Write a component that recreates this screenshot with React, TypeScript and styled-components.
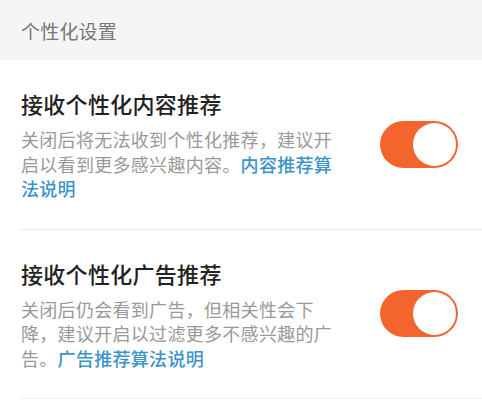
import React from "react";
import styled, { createGlobalStyle } from "styled-components";

const GlobalStyle = createGlobalStyle`
  html, body {
    margin: 0;
    padding: 0;
    background: #ffffff;
  }
  body {
    font-family: "Noto Sans CJK SC", "Noto Sans", sans-serif;
  }
`;

const Page = styled.div`
  width: 482px;
  min-height: 406px;
  background: #ffffff;
  display: flex;
  flex-direction: column;
`;

const GroupHeader = styled.div`
  height: 60px;
  background: #f5f5f5;
  display: flex;
  align-items: center;
  padding: 0 20px 0 21px;
  box-sizing: border-box;
  font-size: 19px;
  color: #777777;
  letter-spacing: 0.2px;
`;

const Row = styled.div`
  display: flex;
  align-items: center;
  justify-content: space-between;
  margin-left: 20px;
  padding: 28px 24px 28px 1px;
  border-bottom: 1px solid #efefef;
`;

const TextBlock = styled.div`
  display: flex;
  flex-direction: column;
  gap: 9px;
  width: 314px;
`;

const Title = styled.div`
  font-size: 22px;
  line-height: 30px;
  font-weight: 500;
  color: #222222;
  letter-spacing: 0.3px;
`;

const Desc = styled.div`
  font-size: 18px;
  line-height: 24.5px;
  color: #999999;
  letter-spacing: 0.3px;
  line-break: strict;
`;

const Link = styled.span`
  color: #3b93cc;
  font-weight: 500;
`;

const Track = styled.div<{ $on: boolean }>`
  width: 78px;
  height: 47px;
  border-radius: 24px;
  background: ${(p) => (p.$on ? "#f4652e" : "#dddddd")};
  display: flex;
  align-items: center;
  justify-content: ${(p) => (p.$on ? "flex-end" : "flex-start")};
  padding: 0 2px;
  box-sizing: border-box;
  flex-shrink: 0;
`;

const Knob = styled.div`
  width: 43px;
  height: 43px;
  border-radius: 50%;
  background: #ffffff;
  box-shadow: 0 0 0 1px rgba(225, 110, 70, 0.55);
`;

type Item = {
  title: string;
  desc: string;
  link: string;
};

const items: Item[] = [
  {
    title: "接收个性化内容推荐",
    desc: "关闭后将无法收到个性化推荐，建议开启以看到更多感兴趣内容。",
    link: "内容推荐算法说明",
  },
  {
    title: "接收个性化广告推荐",
    desc: "关闭后仍会看到广告，但相关性会下降，建议开启以过滤更多不感兴趣的广告。",
    link: "广告推荐算法说明",
  },
];

export default function App() {
  return (
    <>
      <GlobalStyle />
      <Page>
        <GroupHeader>个性化设置</GroupHeader>
        {items.map((it) => (
          <Row key={it.title}>
            <TextBlock>
              <Title>{it.title}</Title>
              <Desc>
                {it.desc}
                <Link>{it.link}</Link>
              </Desc>
            </TextBlock>
            <Track $on>
              <Knob />
            </Track>
          </Row>
        ))}
      </Page>
    </>
  );
}
